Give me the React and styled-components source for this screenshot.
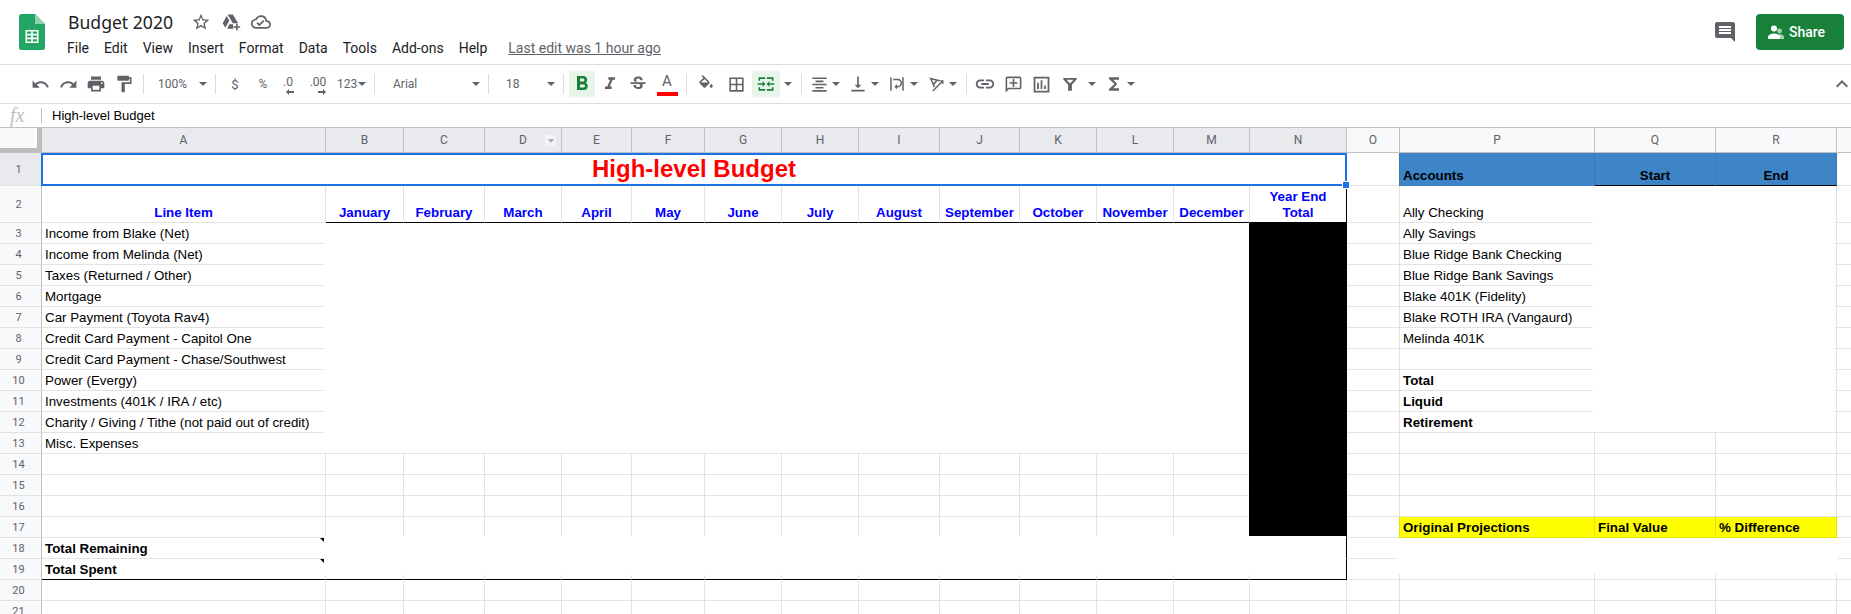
import React from 'react';
import styled, { createGlobalStyle } from 'styled-components';
import {
  MdUndo, MdRedo, MdPrint, MdFormatPaint, MdFormatBold, MdFormatItalic, MdStrikethroughS,
  MdBorderAll, MdFormatAlignCenter, MdVerticalAlignBottom, MdLink, MdFunctions, MdStarBorder,
  MdOutlineCloudDone, MdComment, MdExpandLess,
} from 'react-icons/md';

const Global = createGlobalStyle`
  html, body { margin: 0; padding: 0; background: #fff; overflow: hidden; }
`;

const GRID_COLS = '42px 284px 78px 81px 77px 70px 73px 77px 77px 81px 80px 77px 77px 76px 97px 53px 195px 121px 121px 40px';
const GRID_ROWS = '25px 33px 37px repeat(19, 21px)';
const GRIDLINE = '#e2e3e3';
const HEADLINE = '#c0c0c0';
const ICON = '#5f6368';

const Page = styled.div`
  width: 100%;
  height: 100vh;
  overflow: hidden;
  background: #fff;
  font-family: Roboto, sans-serif;
`;

/* Title bar */
const TitleBar = styled.header`
  display: flex;
  align-items: flex-start;
  padding: 14px 7px 0 19px;
  box-sizing: content-box;
  height: 50px;
  border-bottom: 1px solid #dadce0;
`;
const Logo = styled.svg`
  display: block;
  flex: none;
  width: 26px;
  height: 36px;
  margin-right: 22px;
`;
const DocInfo = styled.div`
  display: flex;
  flex-direction: column;
  gap: 4px;
  margin-top: -3px;
`;
const TitleRow = styled.div`
  display: flex;
  align-items: center;
  height: 22px;
  padding-left: 1px;
`;
const DocName = styled.span`
  font-family: 'Noto Sans', sans-serif;
  font-size: 17.6px;
  color: #202124;
  margin-right: 18px;
`;
const TitleIcons = styled.div`
  display: flex;
  align-items: center;
  gap: 10px;
  color: ${ICON};
`;
const MenuRow = styled.nav`
  display: flex;
  align-items: center;
  height: 22px;
  gap: 15px;
`;
const MenuItem = styled.span`
  font-size: 14px;
  color: #202124;
`;
const LastEdit = styled.a`
  font-size: 14px;
  color: #5f6368;
  text-decoration: underline;
  margin-left: 6px;
`;
const TitleActions = styled.div`
  margin-left: auto;
  display: flex;
  align-items: center;
  gap: 19px;
  color: ${ICON};
`;
const ShareButton = styled.button`
  display: flex;
  align-items: center;
  gap: 5px;
  width: 88px;
  height: 36px;
  padding: 0 0 0 12px;
  border: 0;
  border-radius: 4px;
  background: #188038;
  color: #fff;
  font-family: Roboto, sans-serif;
  font-weight: 500;
  font-size: 14px;
`;

/* Toolbar */
const Toolbar = styled.div`
  display: flex;
  align-items: center;
  height: 38px;
  padding-left: 26px;
  border-bottom: 1px solid #dadce0;
  color: ${ICON};
  position: relative;
`;
const ToolButton = styled.div`
  flex: none;
  display: flex;
  align-items: center;
  justify-content: center;
  width: ${(p) => p.$w || 28}px;
  height: 26px;
  margin-left: ${(p) => p.$ml || 0}px;
  border-radius: 2px;
  background: ${(p) => (p.$active ? '#e6f4ea' : 'transparent')};
  color: ${(p) => (p.$active ? '#188038' : 'inherit')};
`;
const ToolSep = styled.div`
  flex: none;
  width: 1px;
  height: 20px;
  background: #dadce0;
  margin: 0 ${(p) => p.$r ?? 5}px 0 ${(p) => p.$l ?? 5}px;
`;
const Picker = styled.div`
  flex: none;
  display: flex;
  align-items: center;
  justify-content: space-between;
  width: ${(p) => p.$w}px;
  height: 26px;
  box-sizing: border-box;
  padding: 0 3px 0 ${(p) => p.$pl}px;
  font-size: 12px;
  color: ${ICON};
`;
const Caret = styled.span`
  flex: none;
  display: block;
  width: 0;
  height: 0;
  margin-left: ${(p) => p.$ml || 0}px;
  border-left: 4px solid transparent;
  border-right: 4px solid transparent;
  border-top: 4px solid ${ICON};
`;
const ComboTool = styled.div`
  flex: none;
  display: flex;
  align-items: center;
  width: 39px;
  height: 26px;
`;
const ComboIcon = styled.div`
  width: 24px;
  display: flex;
  justify-content: center;
  margin-right: 1px;
`;
const SymbolText = styled.span`
  font-size: ${(p) => p.$size || 12}px;
  color: ${ICON};
`;
const DecimalTool = styled.div`
  flex: none;
  display: flex;
  flex-direction: column;
  align-items: center;
  justify-content: flex-start;
  box-sizing: border-box;
  width: ${(p) => p.$w}px;
  height: 26px;
  padding-top: 5px;
  font-size: 12px;
  line-height: 13px;
  color: ${ICON};
`;
const DecimalArrow = styled.svg`
  display: block;
  width: 8px;
  height: 6px;
  margin: 0 0 0 ${(p) => p.$offset}px;
  fill: currentColor;
`;
const TextColor = styled.div`
  flex: none;
  display: flex;
  flex-direction: column;
  align-items: center;
  width: 28px;
  height: 26px;
  margin-left: ${(p) => p.$ml || 0}px;
  font-size: 15px;
  line-height: 21px;
  color: ${ICON};
`;
const ColorBar = styled.span`
  display: block;
  width: 21px;
  height: 4px;
  background: #ff0000;
`;
const CollapseButton = styled.div`
  position: absolute;
  right: -3px;
  top: 7px;
  color: ${ICON};
`;
const Glyph = styled.svg`
  display: block;
  flex: none;
  width: ${(p) => p.$size || 18}px;
  height: ${(p) => p.$size || 18}px;
  fill: currentColor;
`;

/* Formula bar */
const FormulaBar = styled.div`
  display: flex;
  align-items: center;
  height: 23px;
  border-bottom: 1px solid ${HEADLINE};
`;
const FxMark = styled.span`
  width: 41px;
  box-sizing: border-box;
  padding-left: 10px;
  font-family: 'Liberation Serif', serif;
  font-style: italic;
  font-size: 20px;
  line-height: 23px;
  color: #c0c0c0;
`;
const FormulaSep = styled.span`
  width: 1px;
  height: 15px;
  background: #c0c0c0;
  margin-right: 10px;
`;
const FormulaText = styled.span`
  font-family: 'Liberation Sans', sans-serif;
  font-size: 13px;
  color: #000;
`;

/* Sheet */
const SheetArea = styled.div`
  position: relative;
`;
const SheetGrid = styled.div`
  display: grid;
  grid-template-columns: ${GRID_COLS};
  grid-template-rows: ${GRID_ROWS};
`;
const CoverLayer = styled(SheetGrid)`
  position: absolute;
  left: 0;
  top: 0;
  pointer-events: none;
`;
const Cover = styled.div`
  grid-row: ${(p) => p.$rows};
  grid-column: ${(p) => p.$cols};
  margin: ${(p) => p.$margin};
  background: ${(p) => p.$color || '#fff'};
`;
const Corner = styled.div`
  box-sizing: border-box;
  background: #f8f9fa;
  border-right: 5px solid #bdbdbd;
  border-bottom: 5px solid #bdbdbd;
`;
const ColHead = styled.div`
  position: relative;
  display: flex;
  align-items: center;
  justify-content: center;
  box-sizing: border-box;
  background: ${(p) => (p.$selected ? '#e8eaed' : '#f8f9fa')};
  border-right: 1px solid ${HEADLINE};
  border-bottom: 1px solid ${HEADLINE};
  font-size: 12px;
  color: #5f6368;
`;
const FilterBadge = styled.span`
  position: absolute;
  right: 5px;
  top: 7px;
  width: 11px;
  height: 11px;
  display: flex;
  align-items: center;
  justify-content: center;
  background: #f1f3f4;
  &::after {
    content: '';
    border-left: 3.5px solid transparent;
    border-right: 3.5px solid transparent;
    border-top: 4px solid #a8abaf;
  }
`;
const RowHead = styled.div`
  display: flex;
  align-items: center;
  justify-content: center;
  box-sizing: border-box;
  padding-right: 4px;
  background: ${(p) => (p.$selected ? '#e8eaed' : '#f8f9fa')};
  border-right: 1px solid ${HEADLINE};
  border-bottom: 1px solid ${GRIDLINE};
  font-size: 11px;
  color: #5f6368;
`;
const Cell = styled.div`
  position: relative;
  display: flex;
  align-items: flex-end;
  justify-content: ${(p) => (p.$center ? 'center' : 'flex-start')};
  text-align: ${(p) => (p.$center ? 'center' : 'left')};
  box-sizing: border-box;
  padding: 0 3px 1px;
  white-space: pre;
  font-family: 'Liberation Sans', sans-serif;
  font-size: 13.33px;
  line-height: 16px;
  font-weight: ${(p) => (p.$bold ? 700 : 400)};
  color: ${(p) => p.$color || '#000'};
  background: ${(p) => p.$bg || 'transparent'};
  border-right: 1px solid ${(p) => p.$right || GRIDLINE};
  border-bottom: 1px solid ${(p) => p.$bottom || GRIDLINE};
  box-shadow: ${(p) => (p.$bg ? `-1px 0 0 ${p.$right}` : 'none')};
`;
const TitleCell = styled.div`
  grid-column: span 14;
  position: relative;
  z-index: 2;
  display: flex;
  align-items: center;
  justify-content: center;
  box-sizing: border-box;
  margin-left: -1px;
  padding-bottom: 2px;
  border: 2px solid #1a73e8;
  font-family: 'Liberation Sans', sans-serif;
  font-size: 24px;
  font-weight: 700;
  color: #ff0000;
`;
const FillHandle = styled.span`
  position: absolute;
  right: -5px;
  bottom: -5px;
  width: 6px;
  height: 6px;
  background: #1a73e8;
  border: 1px solid #fff;
`;
const NoteMark = styled.span`
  position: absolute;
  right: 0;
  top: 0;
  width: 0;
  height: 0;
  border-left: 5px solid transparent;
  border-top: 5px solid #000;
`;

const COLS = 'A B C D E F G H I J K L M N O P Q R S'.split(' ');
const MONTHS = ['January', 'February', 'March', 'April', 'May', 'June', 'July', 'August', 'September', 'October', 'November', 'December'];
const MONTH_COLS = 'BCDEFGHIJKLM';
const BLUE = '#0000ff';
const ACCOUNT_BG = '#3d85c6';
const ACCOUNT_LINE = '#3a78b0';
const YELLOW = '#ffff00';
const YELLOW_LINE = '#e4e400';

const TEXTS = {
  A3: 'Income from Blake (Net)',
  A4: 'Income from Melinda (Net)',
  A5: 'Taxes (Returned / Other)',
  A6: 'Mortgage',
  A7: 'Car Payment (Toyota Rav4)',
  A8: 'Credit Card Payment - Capitol One',
  A9: 'Credit Card Payment - Chase/Southwest',
  A10: 'Power (Evergy)',
  A11: 'Investments (401K / IRA / etc)',
  A12: 'Charity / Giving / Tithe (not paid out of credit)',
  A13: 'Misc. Expenses',
  P2: 'Ally Checking',
  P3: 'Ally Savings',
  P4: 'Blue Ridge Bank Checking',
  P5: 'Blue Ridge Bank Savings',
  P6: 'Blake 401K (Fidelity)',
  P7: 'Blake ROTH IRA (Vangaurd)',
  P8: 'Melinda 401K',
};
const BOLD_TEXTS = {
  A18: 'Total Remaining',
  A19: 'Total Spent',
  P10: 'Total',
  P11: 'Liquid',
  P12: 'Retirement',
  P1: 'Accounts',
  P17: 'Original Projections',
  Q17: 'Final Value',
  R17: '% Difference',
};

function cellProps(col, row) {
  const id = col + row;
  const props = {};
  const monthIdx = MONTH_COLS.indexOf(col);
  if (row === 2 && (col === 'A' || col === 'N' || monthIdx >= 0)) {
    props.$bold = true;
    props.$center = true;
    props.$color = BLUE;
  }
  if (row === 2 && (monthIdx >= 0 || col === 'N')) props.$bottom = '#000';
  if (row === 19 && (col === 'A' || monthIdx >= 0 || col === 'N')) props.$bottom = '#000';
  if (col === 'N' && row >= 2 && row <= 19) props.$right = '#000';
  if (BOLD_TEXTS[id]) props.$bold = true;
  if (row === 1 && 'PQR'.includes(col)) {
    props.$bg = ACCOUNT_BG;
    props.$right = ACCOUNT_LINE;
    props.$bottom = col === 'P' ? ACCOUNT_BG : '#000';
    if (col !== 'P') props.$center = true;
    props.$bold = true;
  }
  if (row === 17 && 'PQR'.includes(col)) {
    props.$bg = YELLOW;
    props.$right = YELLOW_LINE;
    props.$bottom = YELLOW_LINE;
  }
  return props;
}

function cellText(col, row) {
  const id = col + row;
  if (TEXTS[id]) return TEXTS[id];
  if (BOLD_TEXTS[id]) return BOLD_TEXTS[id];
  if (id === 'A2') return 'Line Item';
  if (id === 'N2') return 'Year End\nTotal';
  if (id === 'Q1') return 'Start';
  if (id === 'R1') return 'End';
  if (row === 2 && MONTH_COLS.includes(col)) return MONTHS[MONTH_COLS.indexOf(col)];
  return null;
}

const Icon = ({ d, size, rule }) => (
  <Glyph $size={size} viewBox="0 0 24 24"><path d={d} fillRule={rule} /></Glyph>
);

const PATHS = {
  merge: 'M3 4h8v2H5v2H3zM13 4h8v4h-2V6h-6zM3 16h2v2h6v2H3zM19 16h2v4h-8v-2h6zM2 11h6V8.5l3.3 3.5L8 15.500V13H2zM22 11h-6V8.500L12.700 12l3.300 3.500V13h6z',
  fill: 'M16.56 8.94L7.62 0 6.21 1.41l2.38 2.38-5.15 5.15c-.59.59-.59 1.54 0 2.12l5.5 5.5c.29.29.68.44 1.06.44s.77-.15 1.06-.44l5.5-5.5c.59-.58.59-1.53 0-2.12zM5.21 10L10 5.21 14.79 10H5.21zM19 11.5s-2 2.17-2 3.5c0 1.1.9 2 2 2s2-.9 2-2c0-1.33-2-3.5-2-3.5z',
  wrap: 'M3 3h2v18H3zM19 3h2v18h-2zM7 7h6a3.75 3.75 0 0 1 0 7.5h-1V12l-3.5 3.5L12 19v-2.5h1A5.75 5.75 0 0 0 13 5H7z',
  rotate: 'M3.2 3.2l14 3.6-1.3 1.7L13.8 8 9.6 13.4l1.1 1.9-1.4 1.6zM6.6 6.2l2.2 4.6 2.9-3.6zM7 20.6l12-12-2-.1V7h5v5h-1.6l-.1-2L8.4 22z',
  comment: 'M4 2h16a2 2 0 0 1 2 2v12a2 2 0 0 1-2 2H6l-4 4V4a2 2 0 0 1 2-2zM4 4v13.2L5.2 16H20V4zM11 5h2v4h4v2h-4v4h-2v-4H7V9h4z',
  chart: 'M3 3h18v18H3zM5 5v14h14V5zM7 10h2v7H7zM11 7h2v10h-2zM15 13h2v4h-2z',
  filter: 'M3 4h18v1.5L14.5 13v8h-5v-8L3 5.5zM7.4 6.2l4.6 5.2 4.6-5.2z',
  drive: 'M8 3h6.2l6.3 10.5h-6.3zM6.9 4.8l3.1 5.4L5.2 19l-3.2-5.5zM7.3 20l2.9-5.2h4.3V20zM18 14h2v3h3v2h-3v3h-2v-3h-3v-2h3z',
};

const Combo = ({ children }) => (
  <ComboTool>
    <ComboIcon>{children}</ComboIcon>
    <Caret />
  </ComboTool>
);

export default function App() {
  const cells = [];
  for (let row = 1; row <= 21; row += 1) {
    cells.push(<RowHead key={`h${row}`} $selected={row === 1}>{row}</RowHead>);
    COLS.forEach((col) => {
      const key = col + row;
      if (row === 1 && col === 'A') {
        cells.push(
          <TitleCell key={key}>
            High-level Budget
            <FillHandle />
          </TitleCell>
        );
        return;
      }
      if (row === 1 && 'BCDEFGHIJKLMN'.includes(col)) return;
      const hasNote = col === 'A' && (row === 18 || row === 19);
      cells.push(
        <Cell key={key} {...cellProps(col, row)}>
          {cellText(col, row)}
          {hasNote && <NoteMark />}
        </Cell>
      );
    });
  }

  return (
    <Page>
      <Global />
      <TitleBar>
        <Logo viewBox="0 0 26 36">
          <path d="M16 0H2.500A2.500 2.500 0 0 0 0 2.500v31A2.500 2.500 0 0 0 2.500 36h21a2.500 2.500 0 0 0 2.500-2.500V10z" fill="#23a566" />
          <path d="M16 0l10 10H16z" fill="#8ed1b1" />
          <path d="M6.500 16h13v13h-13zM8 17.500v2.200h4.200v-2.200zM13.800 17.500v2.200H18v-2.200zM8 21.400v2.200h4.200v-2.200zM13.800 21.400v2.200H18v-2.200zM8 25.300v2.200h4.200v-2.200zM13.800 25.300v2.200H18v-2.200z" fill="#fff" fillRule="evenodd" />
        </Logo>
        <DocInfo>
          <TitleRow>
            <DocName>Budget 2020</DocName>
            <TitleIcons>
              <MdStarBorder size={20} />
              <Icon d={PATHS.drive} size={20} />
              <MdOutlineCloudDone size={20} />
            </TitleIcons>
          </TitleRow>
          <MenuRow>
            {['File', 'Edit', 'View', 'Insert', 'Format', 'Data', 'Tools', 'Add-ons', 'Help'].map((m) => (
              <MenuItem key={m}>{m}</MenuItem>
            ))}
            <LastEdit>Last edit was 1 hour ago</LastEdit>
          </MenuRow>
        </DocInfo>
        <TitleActions>
          <MdComment size={24} />
          <ShareButton>
            <svg width="16" height="14" viewBox="0 0 16 14">
              <circle cx="6" cy="3.500" r="3" fill="#fff" />
              <circle cx="11.500" cy="6" r="2.400" fill="#a3d0b0" />
              <path d="M10 9.500c2.600-.6 6 .3 6 2.500v2H10z" fill="#a3d0b0" />
              <path d="M0 14v-2c0-2.400 3.600-3.600 6-3.600s6 1.200 6 3.600v2z" fill="#fff" />
            </svg>
            Share
          </ShareButton>
        </TitleActions>
      </TitleBar>

      <Toolbar>
        <ToolButton><MdUndo size={19} /></ToolButton>
        <ToolButton><MdRedo size={19} /></ToolButton>
        <ToolButton><MdPrint size={20} /></ToolButton>
        <ToolButton><MdFormatPaint size={20} /></ToolButton>
        <ToolSep />
        <Picker $w={61} $pl={9}>100%<Caret /></Picker>
        <ToolSep />
        <ToolButton $w={28}><SymbolText $size={13}>$</SymbolText></ToolButton>
        <ToolButton $w={28}><SymbolText $size={12}>%</SymbolText></ToolButton>
        <DecimalTool $w={22}>
          .0
          <DecimalArrow $offset={4} viewBox="0 0 8 6"><path d="M8 2H3V0L0 3l3 3V4h5z" /></DecimalArrow>
        </DecimalTool>
        <DecimalTool $w={38}>
          .00
          <DecimalArrow $offset={8} viewBox="0 0 8 6"><path d="M0 2h5V0l3 3-3 3V4H0z" /></DecimalArrow>
        </DecimalTool>
        <Picker $w={32} $pl={0}>123<Caret /></Picker>
        <ToolSep />
        <Picker $w={103} $pl={13}>Arial<Caret /></Picker>
        <ToolSep />
        <Picker $w={64} $pl={12}>18<Caret /></Picker>
        <ToolSep />
        <ToolButton $w={26} $active><MdFormatBold size={24} /></ToolButton>
        <ToolButton $ml={1}><MdFormatItalic size={20} /></ToolButton>
        <ToolButton><MdStrikethroughS size={20} /></ToolButton>
        <TextColor $ml={1}>A<ColorBar /></TextColor>
        <ToolSep />
        <ToolButton><Icon d={PATHS.fill} size={18} /></ToolButton>
        <ToolButton $ml={2}><MdBorderAll size={19} /></ToolButton>
        <ToolButton $ml={2} $active><Icon d={PATHS.merge} size={20} /></ToolButton>
        <ToolButton $w={15}><Caret /></ToolButton>
        <ToolSep $l={6} />
        <Combo><MdFormatAlignCenter size={19} /></Combo>
        <Combo><MdVerticalAlignBottom size={20} /></Combo>
        <Combo><Icon d={PATHS.wrap} size={18} /></Combo>
        <Combo><Icon d={PATHS.rotate} size={18} /></Combo>
        <ToolSep $l={3} $r={4} />
        <ToolButton><MdLink size={22} /></ToolButton>
        <ToolButton><Icon d={PATHS.comment} size={19} rule="evenodd" /></ToolButton>
        <ToolButton><Icon d={PATHS.chart} size={21} rule="evenodd" /></ToolButton>
        <ToolButton $ml={1}><Icon d={PATHS.filter} size={18} rule="evenodd" /></ToolButton>
        <ToolButton $w={16}><Caret /></ToolButton>
        <ToolButton><MdFunctions size={20} /></ToolButton>
        <Caret $ml={-1} />
        <CollapseButton><MdExpandLess size={24} /></CollapseButton>
      </Toolbar>

      <FormulaBar>
        <FxMark>fx</FxMark>
        <FormulaSep />
        <FormulaText>High-level Budget</FormulaText>
      </FormulaBar>

      <SheetArea>
        <SheetGrid>
          <Corner />
          {COLS.map((c) => (
            <ColHead key={c} $selected={'ABCDEFGHIJKLMN'.includes(c)}>
              {c !== 'S' && c}
              {c === 'D' && <FilterBadge />}
            </ColHead>
          ))}
          {cells}
        </SheetGrid>
        <CoverLayer>
          <Cover $rows="4 / 15" $cols="3 / 15" $margin="0 0 1px -2px" />
          <Cover $rows="3 / 14" $cols="18 / 20" $margin="0 2px 1px -2px" />
          <Cover $rows="19 / 21" $cols="3 / 16" $margin="-2px 1px 5px -2px" />
          <Cover $rows="19 / 21" $cols="17 / 20" $margin="0 -1px 6px -3px" />
          <Cover $rows="4 / 19" $cols="15 / 16" $margin="0 0 2px -1px" $color="#000" />
        </CoverLayer>
      </SheetArea>
    </Page>
  );
}
